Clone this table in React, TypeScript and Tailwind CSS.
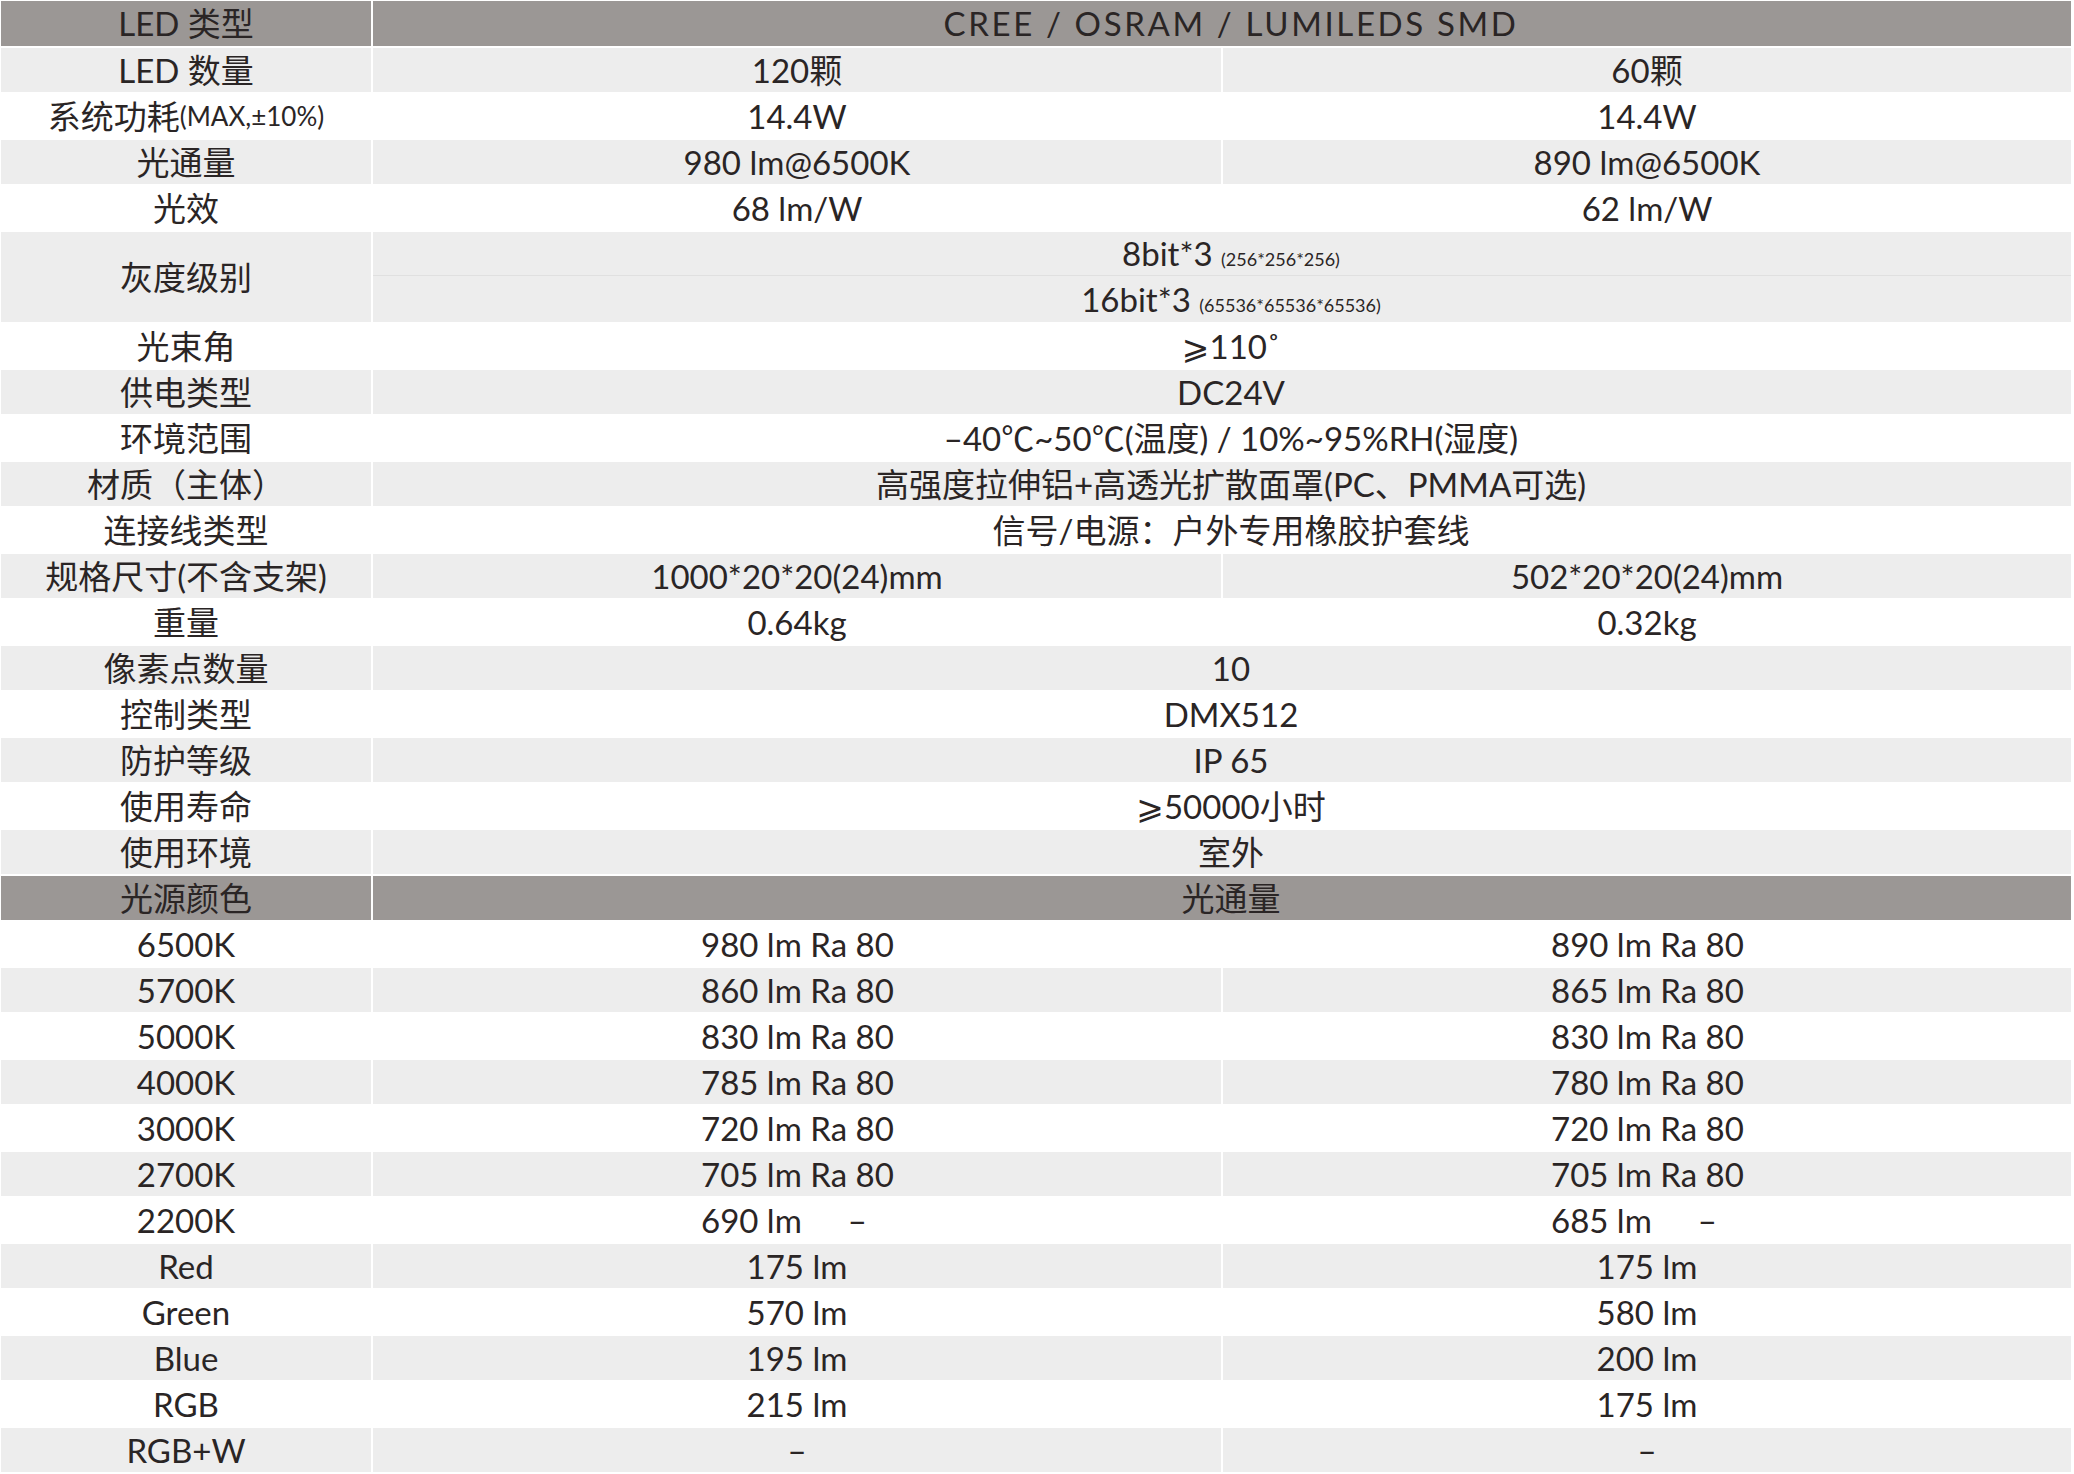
import React from 'react'

type Tone = 'head' | 'gray' | 'white'

type Row = {
  label: React.ReactNode
  values: React.ReactNode[]
  tone: Tone
}

const toneBg: Record<Tone, string> = {
  head: 'bg-[#9b9795]',
  gray: 'bg-[#ededed]',
  white: 'bg-white',
}

// 2200K 一行的数值要和上面 "xxx lm Ra 80" 左端对齐
function NoRa({ lm }: { lm: string }) {
  return (
    <span className="inline-flex w-[192px] whitespace-nowrap text-left">
      <span>{lm}</span>
      <span className="ml-[46px]">–</span>
    </span>
  )
}

function Ra({ v }: { v: string }) {
  return <span className="inline-block w-[192px] whitespace-nowrap text-left">{v}</span>
}

const specRows: Row[] = [
  { label: 'LED 数量', values: ['120颗', '60颗'], tone: 'gray' },
  {
    label: (
      <>
        系统功耗<span className="text-[26px]">(MAX,±10%)</span>
      </>
    ),
    values: ['14.4W', '14.4W'],
    tone: 'white',
  },
  { label: '光通量', values: ['980 lm@6500K', '890 lm@6500K'], tone: 'gray' },
  { label: '光效', values: ['68 lm/W', '62 lm/W'], tone: 'white' },
]

const specRows2: Row[] = [
  { label: '光束角', values: ['⩾110˚'], tone: 'white' },
  { label: '供电类型', values: ['DC24V'], tone: 'gray' },
  { label: '环境范围', values: ['–40℃~50℃(温度) / 10%~95%RH(湿度)'], tone: 'white' },
  { label: '材质（主体）', values: ['高强度拉伸铝+高透光扩散面罩(PC、PMMA可选)'], tone: 'gray' },
  { label: '连接线类型', values: ['信号/电源：户外专用橡胶护套线'], tone: 'white' },
  { label: '规格尺寸(不含支架)', values: ['1000*20*20(24)mm', '502*20*20(24)mm'], tone: 'gray' },
  { label: '重量', values: ['0.64kg', '0.32kg'], tone: 'white' },
  { label: '像素点数量', values: ['10'], tone: 'gray' },
  { label: '控制类型', values: ['DMX512'], tone: 'white' },
  { label: '防护等级', values: ['IP 65'], tone: 'gray' },
  { label: '使用寿命', values: ['⩾50000小时'], tone: 'white' },
  { label: '使用环境', values: ['室外'], tone: 'gray' },
  { label: '光源颜色', values: ['光通量'], tone: 'head' },
  { label: '6500K', values: [<Ra v="980 lm Ra 80" />, <Ra v="890 lm Ra 80" />], tone: 'white' },
  { label: '5700K', values: [<Ra v="860 lm Ra 80" />, <Ra v="865 lm Ra 80" />], tone: 'gray' },
  { label: '5000K', values: [<Ra v="830 lm Ra 80" />, <Ra v="830 lm Ra 80" />], tone: 'white' },
  { label: '4000K', values: [<Ra v="785 lm Ra 80" />, <Ra v="780 lm Ra 80" />], tone: 'gray' },
  { label: '3000K', values: [<Ra v="720 lm Ra 80" />, <Ra v="720 lm Ra 80" />], tone: 'white' },
  { label: '2700K', values: [<Ra v="705 lm Ra 80" />, <Ra v="705 lm Ra 80" />], tone: 'gray' },
  { label: '2200K', values: [<NoRa lm="690 lm" />, <NoRa lm="685 lm" />], tone: 'white' },
  { label: 'Red', values: ['175 lm', '175 lm'], tone: 'gray' },
  { label: 'Green', values: ['570 lm', '580 lm'], tone: 'white' },
  { label: 'Blue', values: ['195 lm', '200 lm'], tone: 'gray' },
  { label: 'RGB', values: ['215 lm', '175 lm'], tone: 'white' },
  { label: 'RGB+W', values: ['–', '–'], tone: 'gray' },
]

function TableRow({ row }: { row: Row }) {
  const bg = toneBg[row.tone]
  return (
    <div className="grid h-[44px] grid-cols-[370px_848px_848px] gap-x-[2px]">
      <div className={`flex items-center justify-center whitespace-nowrap ${bg}`}>{row.label}</div>
      {row.values.length === 1 ? (
        <div className={`col-span-2 flex items-center justify-center whitespace-nowrap pl-[18px] ${bg}`}>
          {row.values[0]}
        </div>
      ) : (
        row.values.map((v, i) => (
          <div key={i} className={`flex items-center justify-center whitespace-nowrap ${bg}`}>
            {v}
          </div>
        ))
      )}
    </div>
  )
}

export default function App() {
  return (
    <div className="min-h-[1474px] w-[2074px] bg-white pl-px pt-px font-['Lato','Noto_Sans_CJK_SC','DejaVu_Sans',sans-serif] text-[33px] font-normal leading-none text-[#2a2525]">
      <div className="flex flex-col gap-y-[2px]">
        <div className="grid h-[45px] grid-cols-[370px_1698px] gap-x-[2px]">
          <div className="flex items-center justify-center bg-[#9b9795]">LED 类型</div>
          <div className="flex items-center justify-center bg-[#9b9795] pl-[18px] tracking-[0.08em]">
            CREE / OSRAM / LUMILEDS SMD
          </div>
        </div>

        {specRows.map((r, i) => (
          <TableRow key={'a' + i} row={r} />
        ))}

        <div className="grid h-[90px] grid-cols-[370px_1698px] gap-x-[2px]">
          <div className="flex items-center justify-center bg-[#ededed]">灰度级别</div>
          <div className="flex flex-col bg-[#ededed]">
            <div className="flex h-[44px] items-center justify-center border-b border-[#e0e0e0] pl-[18px]">
              <span>
                8bit*3 <span className="text-[18px]">(256*256*256)</span>
              </span>
            </div>
            <div className="flex flex-1 items-center justify-center pl-[18px]">
              <span>
                16bit*3 <span className="text-[18px]">(65536*65536*65536)</span>
              </span>
            </div>
          </div>
        </div>

        {specRows2.map((r, i) => (
          <TableRow key={'b' + i} row={r} />
        ))}
      </div>
    </div>
  )
}
